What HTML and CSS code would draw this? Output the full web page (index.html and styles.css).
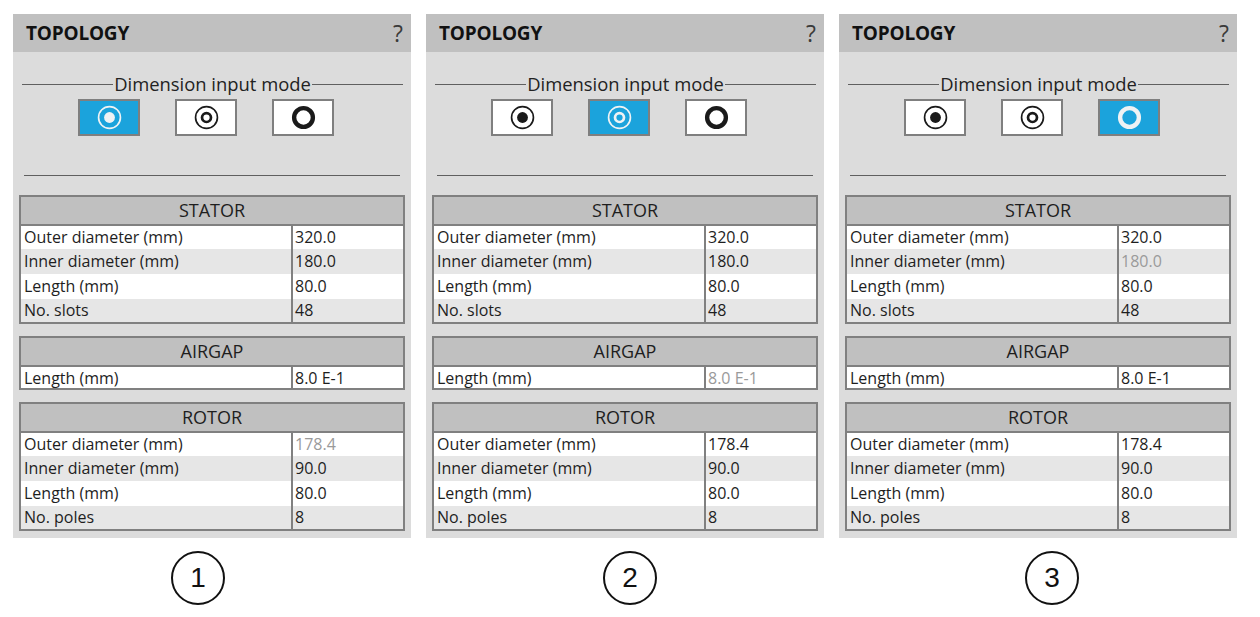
FILE: index.html
```html
<!DOCTYPE html>
<html>
<head>
<meta charset="utf-8">
<link rel="stylesheet" href="styles.css">
</head>
<body>
<svg width="0" height="0" class="defs">
  <defs>
    <g id="ico-dot"><circle cx="12" cy="12" r="10.5" fill="none" stroke="currentColor" stroke-width="1.6"/><circle cx="12" cy="12" r="5.2" fill="currentColor"/></g>
    <g id="ico-donut"><circle cx="12" cy="12" r="10.5" fill="none" stroke="currentColor" stroke-width="1.6"/><circle cx="12" cy="12" r="4.3" fill="none" stroke="currentColor" stroke-width="2.6"/></g>
    <g id="ico-ring"><circle cx="12" cy="12" r="9" fill="none" stroke="currentColor" stroke-width="4.2"/></g>
  </defs>
</svg>
<div class="page">
  <div class="col">
    <div class="panel">
      <div class="head"><span class="title">TOPOLOGY</span><span class="help">?</span></div>
      <div class="body">
        <div class="legend"><span>Dimension input mode</span></div>
        <div class="modes">
          <div class="mode sel"><svg viewBox="0 0 24 24"><use href="#ico-dot"/></svg></div>
          <div class="mode"><svg viewBox="0 0 24 24"><use href="#ico-donut"/></svg></div>
          <div class="mode"><svg viewBox="0 0 24 24"><use href="#ico-ring"/></svg></div>
        </div>
        <div class="rule"></div>
        <div class="tbl">
          <div class="th">STATOR</div>
          <div class="tr"><span class="k">Outer diameter (mm)</span><span class="v">320.0</span></div>
          <div class="tr alt"><span class="k">Inner diameter (mm)</span><span class="v">180.0</span></div>
          <div class="tr"><span class="k">Length (mm)</span><span class="v">80.0</span></div>
          <div class="tr alt"><span class="k">No. slots</span><span class="v">48</span></div>
        </div>
        <div class="tbl">
          <div class="th">AIRGAP</div>
          <div class="tr"><span class="k">Length (mm)</span><span class="v">8.0 E-1</span></div>
        </div>
        <div class="tbl">
          <div class="th">ROTOR</div>
          <div class="tr"><span class="k">Outer diameter (mm)</span><span class="v dis">178.4</span></div>
          <div class="tr alt"><span class="k">Inner diameter (mm)</span><span class="v">90.0</span></div>
          <div class="tr"><span class="k">Length (mm)</span><span class="v">80.0</span></div>
          <div class="tr alt"><span class="k">No. poles</span><span class="v">8</span></div>
        </div>
      </div>
    </div>
    <div class="num n1">1</div>
  </div>

  <div class="col">
    <div class="panel">
      <div class="head"><span class="title">TOPOLOGY</span><span class="help">?</span></div>
      <div class="body">
        <div class="legend"><span>Dimension input mode</span></div>
        <div class="modes">
          <div class="mode"><svg viewBox="0 0 24 24"><use href="#ico-dot"/></svg></div>
          <div class="mode sel"><svg viewBox="0 0 24 24"><use href="#ico-donut"/></svg></div>
          <div class="mode"><svg viewBox="0 0 24 24"><use href="#ico-ring"/></svg></div>
        </div>
        <div class="rule"></div>
        <div class="tbl">
          <div class="th">STATOR</div>
          <div class="tr"><span class="k">Outer diameter (mm)</span><span class="v">320.0</span></div>
          <div class="tr alt"><span class="k">Inner diameter (mm)</span><span class="v">180.0</span></div>
          <div class="tr"><span class="k">Length (mm)</span><span class="v">80.0</span></div>
          <div class="tr alt"><span class="k">No. slots</span><span class="v">48</span></div>
        </div>
        <div class="tbl">
          <div class="th">AIRGAP</div>
          <div class="tr"><span class="k">Length (mm)</span><span class="v dis">8.0 E-1</span></div>
        </div>
        <div class="tbl">
          <div class="th">ROTOR</div>
          <div class="tr"><span class="k">Outer diameter (mm)</span><span class="v">178.4</span></div>
          <div class="tr alt"><span class="k">Inner diameter (mm)</span><span class="v">90.0</span></div>
          <div class="tr"><span class="k">Length (mm)</span><span class="v">80.0</span></div>
          <div class="tr alt"><span class="k">No. poles</span><span class="v">8</span></div>
        </div>
      </div>
    </div>
    <div class="num n2">2</div>
  </div>

  <div class="col">
    <div class="panel">
      <div class="head"><span class="title">TOPOLOGY</span><span class="help">?</span></div>
      <div class="body">
        <div class="legend"><span>Dimension input mode</span></div>
        <div class="modes">
          <div class="mode"><svg viewBox="0 0 24 24"><use href="#ico-dot"/></svg></div>
          <div class="mode"><svg viewBox="0 0 24 24"><use href="#ico-donut"/></svg></div>
          <div class="mode sel"><svg viewBox="0 0 24 24"><use href="#ico-ring"/></svg></div>
        </div>
        <div class="rule"></div>
        <div class="tbl">
          <div class="th">STATOR</div>
          <div class="tr"><span class="k">Outer diameter (mm)</span><span class="v">320.0</span></div>
          <div class="tr alt"><span class="k">Inner diameter (mm)</span><span class="v dis">180.0</span></div>
          <div class="tr"><span class="k">Length (mm)</span><span class="v">80.0</span></div>
          <div class="tr alt"><span class="k">No. slots</span><span class="v">48</span></div>
        </div>
        <div class="tbl">
          <div class="th">AIRGAP</div>
          <div class="tr"><span class="k">Length (mm)</span><span class="v">8.0 E-1</span></div>
        </div>
        <div class="tbl">
          <div class="th">ROTOR</div>
          <div class="tr"><span class="k">Outer diameter (mm)</span><span class="v">178.4</span></div>
          <div class="tr alt"><span class="k">Inner diameter (mm)</span><span class="v">90.0</span></div>
          <div class="tr"><span class="k">Length (mm)</span><span class="v">80.0</span></div>
          <div class="tr alt"><span class="k">No. poles</span><span class="v">8</span></div>
        </div>
      </div>
    </div>
    <div class="num n3">3</div>
  </div>
</div>
</body>
</html>
```

FILE: styles.css
```css
* { box-sizing: border-box; }
html, body { margin: 0; padding: 0; background: #ffffff; }
body { font-family: "Open Sans", "Noto Sans", sans-serif; color: #1e1e1e; }
.defs { position: absolute; width: 0; height: 0; }

.page {
  display: flex;
  gap: 15px;
  padding: 14px 0 0 13px;
}
.col { width: 398px; display: flex; flex-direction: column; }

.panel { background: #dcdcdc; }

.head {
  height: 38px;
  background: #c0c0c0;
  display: flex;
  align-items: center;
  justify-content: space-between;
  padding: 0 8px 0 13px;
}
.title { font-weight: 700; font-size: 19px; color: #111; letter-spacing: -0.2px; }
.help { font-size: 23px; color: #3a3a3a; font-weight: 400; line-height: 1; }

.body { padding: 20px 6px 7px 6px; }

.legend {
  display: flex;
  align-items: center;
  padding: 0 2px 0 3px;
  font-size: 18.4px;
  line-height: 24px;
  color: #222;
}
.legend::before, .legend::after {
  content: "";
  flex: 1;
  height: 1px;
  background: #606060;
}
.legend span { padding: 0 1px; }

.modes {
  display: flex;
  gap: 35px;
  padding-left: 59px;
  margin-top: 3px;
}
.mode {
  width: 62px;
  height: 37px;
  background: #ffffff;
  border: 2px solid #7f7f7f;
  display: flex;
  align-items: center;
  justify-content: center;
  color: #1a1a1a;
}
.mode svg { width: 25px; height: 25px; }
.mode.sel { background: #1ba3dc; color: #eef2f4; }

.rule {
  height: 1px;
  background: #606060;
  margin: 39px 5px 19px 5px;
}

.tbl {
  border: 2px solid #808080;
  margin-bottom: 12px;
}
.tbl:last-child { margin-bottom: 0; }
.th {
  height: 29px;
  background: #c0c0c0;
  border-bottom: 2px solid #808080;
  text-align: center;
  font-size: 18px;
  line-height: 27px;
  color: #1e1e1e;
}
.tr {
  display: grid;
  grid-template-columns: 270px 1fr;
  height: 25px;
  background: #ffffff;
  font-size: 16px;
  line-height: 24px;
}
.tr:nth-child(2), .tr:last-child { height: 23px; line-height: 23px; }
.tr:nth-child(2):last-child { height: 21px; line-height: 22px; }
.tr.alt { background: #e6e6e6; }
.k { padding-left: 3px; white-space: nowrap; }
.v { border-left: 2px solid #808080; padding-left: 2px; }
.v.dis { color: #9a9a9a; }

.num {
  width: 54px;
  height: 54px;
  border: 2px solid #111;
  border-radius: 50%;
  margin-top: 13px;
  display: flex;
  align-items: center;
  justify-content: center;
  font-family: "Liberation Sans", Arial, sans-serif;
  font-size: 28px;
  color: #111;
  align-self: center;
}
.n1 { transform: translateX(-14px); }
.n2 { transform: translateX(5px); }
.n3 { transform: translateX(14px); }
```
